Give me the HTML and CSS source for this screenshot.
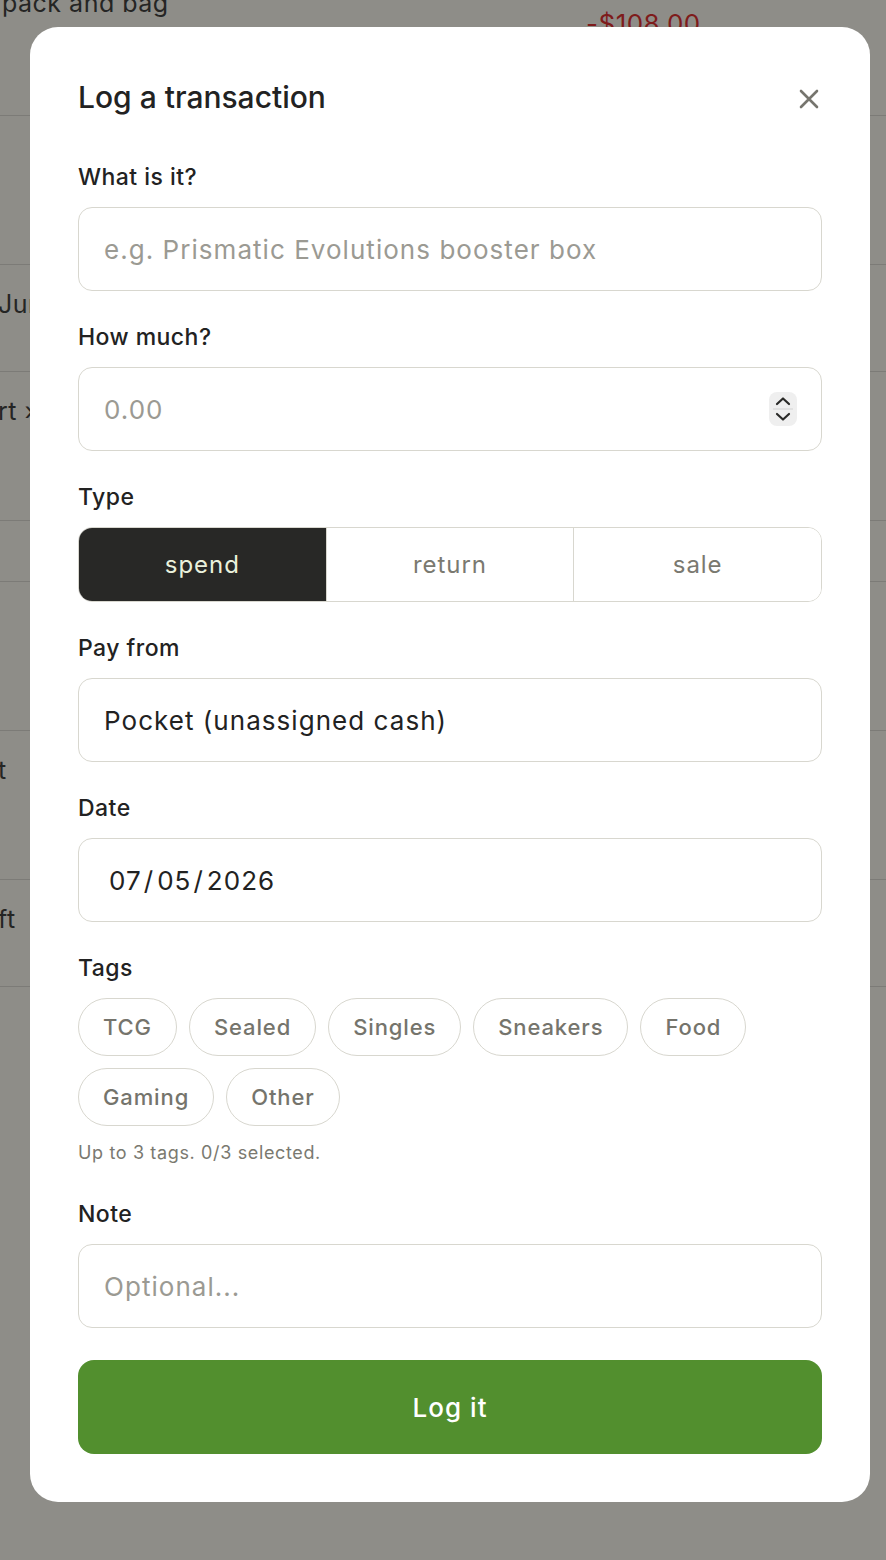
FILE: index.html
```html
<!DOCTYPE html>
<html lang="en">
  <head>
    <meta charset="UTF-8" />
    <meta name="viewport" content="width=device-width, initial-scale=1.0" />
    <title>Log a transaction</title>
    <link rel="stylesheet" href="styles.css">
  </head>
  <body>
    <!-- list behind the overlay -->
    <div class="feed">
      <div class="feed-row row-top">
        <span class="feed-name">pack and bag</span>
        <span class="feed-amount">-$108.00</span>
      </div>
      <div class="feed-row row-tall"></div>
      <div class="feed-row row-mid"><span class="feed-name">Jun</span></div>
      <div class="feed-row row-tall"><span class="feed-name">rt ›</span></div>
      <div class="feed-row row-short"></div>
      <div class="feed-row row-tall"></div>
      <div class="feed-row row-tall"><span class="feed-name">t</span></div>
      <div class="feed-row row-mid"><span class="feed-name">ft</span></div>
    </div>

    <div class="overlay">
      <div class="modal">
        <div class="modal-head">
          <h2>Log a transaction</h2>
          <button class="close-btn" aria-label="Close">
            <svg width="20" height="20" viewBox="0 0 20 20">
              <path d="M2 2 L18 18 M18 2 L2 18" stroke="#76756e" stroke-width="2.6" stroke-linecap="round" fill="none" />
            </svg>
          </button>
        </div>

        <div class="field">
          <label class="field-label">What is it?</label>
          <input class="input" type="text" placeholder="e.g. Prismatic Evolutions booster box" />
        </div>

        <div class="field">
          <label class="field-label">How much?</label>
          <div class="input input-wrap">
            <input class="bare" type="text" placeholder="0.00" />
            <span class="spinner">
              <svg width="28" height="34" viewBox="0 0 28 34">
                <path d="M8 12 L14 6.5 L20 12" stroke="#2a2a28" stroke-width="2.2" fill="none" stroke-linecap="round" stroke-linejoin="round" />
                <line x1="4" y1="17" x2="24" y2="17" stroke="#dcdcdc" stroke-width="1.5" />
                <path d="M8 22 L14 27.5 L20 22" stroke="#2a2a28" stroke-width="2.2" fill="none" stroke-linecap="round" stroke-linejoin="round" />
              </svg>
            </span>
          </div>
        </div>

        <div class="field">
          <label class="field-label">Type</label>
          <div class="segmented">
            <button class="seg active">spend</button>
            <button class="seg">return</button>
            <button class="seg">sale</button>
          </div>
        </div>

        <div class="field">
          <label class="field-label">Pay from</label>
          <div class="input input-wrap">
            <span class="value">Pocket (unassigned cash)</span>
          </div>
        </div>

        <div class="field">
          <label class="field-label">Date</label>
          <div class="input input-wrap">
            <span class="value date">07<span class="slash">/</span>05<span class="slash">/</span>2026</span>
          </div>
        </div>

        <div class="field tags-field">
          <label class="field-label">Tags</label>
          <div class="chips">
            <button class="chip">TCG</button>
            <button class="chip">Sealed</button>
            <button class="chip">Singles</button>
            <button class="chip">Sneakers</button>
            <button class="chip">Food</button>
            <button class="chip">Gaming</button>
            <button class="chip">Other</button>
          </div>
          <p class="hint">Up to 3 tags. 0/3 selected.</p>
        </div>

        <div class="field">
          <label class="field-label">Note</label>
          <input class="input" type="text" placeholder="Optional..." />
        </div>

        <button class="submit">Log it</button>
      </div>
    </div>
  </body>
</html>
```

FILE: styles.css
```css
* {
  box-sizing: border-box;
}

body {
  margin: 0;
  font-family: Inter, "Noto Sans", sans-serif;
  letter-spacing: 0.04em;
  background-color: #8e8d88;
  color: #222;
  height: 1560px;
  overflow: hidden;
}

/* background list */
.feed {
  color: #252524;
  font-size: 25px;
  letter-spacing: 0.02em;
}

.feed-row {
  display: flow-root;
  position: relative;
  border-bottom: 1px solid #7c7b77;
}

.row-top {
  height: 116px;
}

.row-tall {
  height: 149px;
}

.row-mid {
  height: 107px;
}

.row-short {
  height: 61px;
}

.feed-name {
  display: block;
  padding-top: 24px;
  margin-left: -2px;
  white-space: nowrap;
}

.row-top .feed-name {
  padding-top: 0;
  margin-top: -12px;
  margin-left: 2px;
}

.feed-amount {
  position: absolute;
  left: 586px;
  top: 8px;
  color: #7e1b1b;
  font-size: 26px;
}

/* modal */
.overlay {
  position: fixed;
  inset: 0;
}

.modal {
  position: absolute;
  top: 27px;
  left: 30px;
  width: 840px;
  background: #fff;
  border-radius: 28px;
  padding: 50px 48px 48px;
}

.modal-head {
  display: flex;
  justify-content: space-between;
  align-items: center;
  margin-bottom: 45px;
}

.modal-head h2 {
  margin: 0;
  font-size: 30px;
  line-height: 40px;
  font-weight: 500;
  letter-spacing: 0;
  color: #222;
}

.close-btn {
  background: none;
  border: none;
  padding: 0;
  margin-right: 3px;
  margin-top: 4px;
  display: flex;
  cursor: pointer;
}

.field {
  margin-bottom: 31px;
}

.field-label {
  display: block;
  font-size: 23px;
  line-height: 30px;
  font-weight: 500;
  letter-spacing: 0.02em;
  color: #222;
  margin-bottom: 15px;
}

.input {
  display: block;
  width: 100%;
  height: 84px;
  border: 1.5px solid #d8d7cf;
  border-radius: 14px;
  padding: 0 25px;
  font-family: inherit;
  font-size: 26px;
  letter-spacing: 0.04em;
  color: #222;
  background: #fff;
  outline: none;
}

.input::placeholder,
.bare::placeholder {
  color: #9b9a93;
}

.input-wrap {
  display: flex;
  align-items: center;
}

.bare {
  flex: 1;
  border: none;
  outline: none;
  padding: 0;
  font-family: inherit;
  font-size: 26px;
  letter-spacing: 0.04em;
  color: #222;
}

.spinner {
  display: flex;
  background: #efefef;
  border-radius: 8px;
  margin-right: -1px;
}

.value {
  font-size: 26px;
  color: #222;
}

.value.date {
  padding-left: 5px;
}

.slash {
  padding: 0 3px 0 2px;
}

/* type switch */
.segmented {
  display: flex;
  height: 75px;
  border: 1.5px solid #d8d7cf;
  border-radius: 14px;
  overflow: hidden;
}

.seg {
  flex: 1;
  border: none;
  background: #fff;
  font-family: inherit;
  font-size: 24px;
  letter-spacing: 0.04em;
  color: #7a7970;
  cursor: pointer;
}

.seg + .seg {
  border-left: 1.5px solid #d8d7cf;
}

.seg.active {
  background: #282826;
  color: #eaf1dc;
}

/* tags */
.tags-field {
  margin-bottom: 34px;
}

.chips {
  display: flex;
  flex-wrap: wrap;
  gap: 12px;
}

.chip {
  height: 58px;
  padding: 0 24px;
  border: 1.5px solid #d8d7cf;
  border-radius: 29px;
  background: #fff;
  font-family: inherit;
  font-size: 22px;
  font-weight: 500;
  letter-spacing: 0.04em;
  color: #75746c;
  cursor: pointer;
}

.hint {
  margin: 15px 0 0;
  font-size: 18px;
  line-height: 24px;
  color: #7a7970;
}

.submit {
  display: block;
  width: 100%;
  height: 94px;
  margin-top: 32px;
  border: none;
  border-radius: 16px;
  background-color: #528f2e;
  color: #fff;
  font-family: inherit;
  font-size: 26px;
  font-weight: 500;
  letter-spacing: 0.04em;
  cursor: pointer;
}
```
